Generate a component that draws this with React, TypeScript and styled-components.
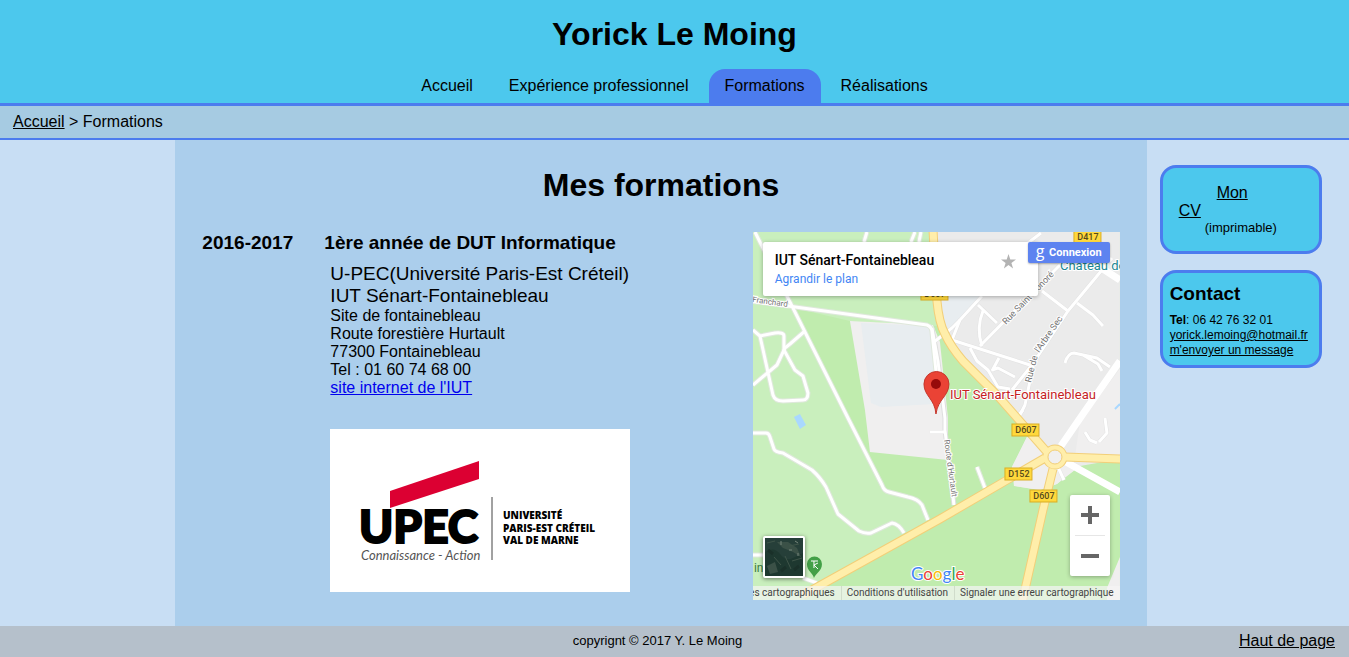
import React from "react";
import styled, { createGlobalStyle } from "styled-components";

const GlobalStyle = createGlobalStyle`
  * { box-sizing: border-box; }
  body {
    margin: 0;
    background: #c8def4;
    color: #000;
    font: 16px/18px "Liberation Sans", Arial, sans-serif;
  }
  h1, h2, h3, p, ul { margin: 0; padding: 0; }
  a { color: #000; }
`;

const royal = "#4c7cee";
const sky = "#4cc8ed";

const Page = styled.div`
  min-height: 100vh;
  display: flex;
  flex-direction: column;
`;

const Header = styled.header`
  background: ${sky};
  border-bottom: 3px solid ${royal};
  padding-top: 16px;
  text-align: center;
`;

const Title = styled.h1`
  font-size: 32px;
  line-height: 37px;
`;

const Nav = styled.nav`
  display: flex;
  justify-content: center;
  gap: 4px;
  margin-top: 16px;
`;

const Tab = styled.a<{ $active?: boolean }>`
  padding: 8px 16px;
  border-radius: 16px 16px 0 0;
  text-decoration: none;
  background: ${(p) => (p.$active ? royal : "transparent")};
`;

const Breadcrumb = styled.nav`
  background: #a6cbe2;
  border-bottom: 2px solid ${royal};
  padding: 7px 13px;
`;

const Columns = styled.div`
  flex: 1;
  display: grid;
  grid-template-columns: 13% 72% 15%;
`;

const Main = styled.main`
  grid-column: 2;
  background: #abceec;
  padding: 27px 27px 26px;
`;

const PageTitle = styled.h1`
  font-size: 32px;
  line-height: 37px;
  text-align: center;
`;

const Course = styled.section`
  display: grid;
  grid-template-columns: 122px 1fr 40%;
  margin-top: 28px;
`;

const CourseHeading = styled.h2`
  font-size: 19px;
  line-height: 22px;
`;

const Address = styled.div`
  padding: 9px 0 0 6px;
`;

const School = styled.p`
  font-size: 19px;
  line-height: 22px;
`;

const SiteLink = styled.a`
  color: #0000ee;
`;

const Logo = styled.svg`
  display: block;
  width: 300px;
  height: 163px;
  margin-top: 32px;
  background: #fff;
`;

const Aside = styled.aside`
  display: flex;
  flex-direction: column;
  gap: 16px;
  padding: 25px 27px 0 13px;
`;

const Card = styled.section`
  background: ${sky};
  border: 3px solid ${royal};
  border-radius: 16px;
`;

const CvCard = styled(Card)`
  padding: 16px 16px 15px;
`;

const CvLink = styled.a`
  display: block;
  text-indent: 38px;
`;

const Printable = styled.p`
  font-size: 13px;
  line-height: 16px;
  text-align: center;
`;

const ContactCard = styled(Card)`
  padding: 10px 0 7px 7px;
  font-size: 12px;
  line-height: 15px;
`;

const ContactTitle = styled.h2`
  font-size: 19px;
  line-height: 22px;
  margin-bottom: 8px;
`;

const Footer = styled.footer`
  background: #b5c0cb;
  display: grid;
  grid-template-columns: 1fr auto 1fr;
  align-items: center;
  padding: 6px 14px 7px 0;
`;

const Copyright = styled.p`
  grid-column: 2;
  margin-right: 20px;
  font-size: 13px;
`;

const TopLink = styled.a`
  justify-self: end;
`;

const MapFrame = styled.div`
  position: relative;
  height: 368px;
  overflow: hidden;
  font-family: Roboto, sans-serif;
`;

const MapDrawing = styled.svg`
  display: block;
  width: 100%;
  height: 100%;
`;

const PlaceCard = styled.div`
  position: absolute;
  top: 10px;
  left: 10px;
  width: 275px;
  height: 54px;
  padding: 9px 12px;
  display: flex;
  justify-content: space-between;
  background: #fff;
  border-radius: 2px;
  box-shadow: 0 1px 4px rgba(0, 0, 0, 0.3);
`;

const PlaceName = styled.h3`
  font-size: 14px;
  line-height: 18px;
  font-weight: 500;
`;

const EnlargeLink = styled.a`
  display: block;
  font-size: 12px;
  line-height: 20px;
  color: #4285f4;
  text-decoration: none;
`;

const StarButton = styled.button`
  border: 0;
  padding: 3px 10px 0 0;
  background: none;
  align-self: flex-start;
`;

const SignIn = styled.button`
  position: absolute;
  top: 10px;
  right: 10px;
  width: 82px;
  height: 21px;
  padding: 0 8px;
  display: flex;
  align-items: center;
  justify-content: space-between;
  border: 0;
  border-radius: 2px;
  background: #5d83f0;
  color: #fff;
  font: bold 11px/21px Roboto, sans-serif;
  box-shadow: 0 1px 2px rgba(0, 0, 0, 0.3);
`;

const GoogleMark = styled.span`
  font: 16px/16px "Open Sans", sans-serif;
  padding-bottom: 4px;
`;

const ZoomControl = styled.div`
  position: absolute;
  right: 10px;
  bottom: 24px;
  width: 40px;
  height: 81px;
  padding: 0 5px;
  display: flex;
  flex-direction: column;
  background: #fff;
  border-radius: 2px;
  box-shadow: 0 1px 4px rgba(0, 0, 0, 0.3);
`;

const ZoomButton = styled.button`
  flex: 1;
  border: 0;
  padding: 0;
  background: none;
  display: grid;
  place-items: center;
  & + & { border-top: 1px solid #e6e6e6; }
`;

const Satellite = styled.button`
  position: absolute;
  left: 10px;
  bottom: 22px;
  width: 42px;
  height: 42px;
  padding: 0;
  border: 2px solid #fff;
  border-radius: 2px;
  background: #24403a;
  overflow: hidden;
  box-shadow: 0 1px 4px rgba(0, 0, 0, 0.5);
`;

const MapLegal = styled.div`
  position: absolute;
  right: 0;
  bottom: 0;
  left: 0;
  height: 14px;
  display: flex;
  justify-content: flex-end;
  background: rgba(245, 245, 245, 0.7);
  white-space: nowrap;
`;

const LegalLink = styled.a`
  padding: 0 6px 0 5px;
  font-size: 10px;
  line-height: 14px;
  color: #444;
  text-decoration: none;
  & + & { border-left: 1px solid #d0dccb; }
`;

const greenRoads = [
  "M2 0L95 186L129 253Q131 259 136 260L155 265Q165 267 169 273L175 288",
  "M-3 69L35 74L174 93Q179 95 179 100L183 139",
  "M0 98L7 104L22 101Q31 100 31 104V118L42 138L50 144L55 161Q55 168 50 168L30 169Q22 169 20 163L7 104",
  "M0 153L24 133L32 116L37 112L52 99",
  "M-3 201H13Q16 201 17 205L21 217Q22 220 30 221L59 238Q67 245 73 255L85 282L106 299Q112 302 118 301L139 291Q146 292 151 301",
  "M0 323H10M50 346L64 351",
  "M114 0L111 10M162 0L158 10M168 0L166 10M224 235L232 256",
];

const cityRoads = [
  "M288 1L275 11M307 33L227 114",
  "M359 26L315 79L281 130L272 173L267 183M283 128L259 158",
  "M289 59L315 79M229 64L207 88L199 108L277 133",
  "M181 110L199 96L207 88M225 73L244 91M230 79Q223 96 229 114",
  "M217 116L224 129L235 138L245 155L257 157M246 126L239 139M239 138L245 136L262 145",
  "M324 71L340 83L350 94M312 131Q315 121 321 121L344 126L357 135M330 123L345 132L349 139",
  "M332 200L337 208L344 211M346 210L354 201L352 186M305 235L311 248M270 178L264 185",
  "M177 200H192",
];

const yellowRoads =
  "M180 -3L184 69Q186 91 192 102Q198 115 210 129L244 163L294 220M50 363L187 287L292 226M312 225L370 227M300 237L290 278L269 371";

const roadSigns = [
  { x: 321, y: -1, label: "D417" },
  { x: 168, y: 56, label: "D607" },
  { x: 259, y: 192, label: "D607" },
  { x: 252, y: 236, label: "D152" },
  { x: 277, y: 258, label: "D607" },
];

function MapArt() {
  return (
    <MapDrawing viewBox="0 0 367 368" preserveAspectRatio="xMidYMid slice" aria-hidden="true">
      <rect width="367" height="368" fill="#c9efbd" />
      <path d="M41 76L97 89L184 94L190 94L300 210L367 227V368H50L175 288L167 271L134 260L95 186Z" fill="#c0ecae" />
      <path d="M182 0H367V227L327 234L312 245L304 252L287 258L262 254L259 235L274 205L286 212L210 130Q190 112 182 69Z" fill="#ebebeb" />
      <path d="M274 205L259 235L261 254L287 258L304 252L327 234L302 220ZM367 325L354 356V368H367ZM367 137L327 190L322 225L367 227Z" fill="#f0efef" />
      <path d="M97 89L180 93L187 110L195 186V228L117 220L112 178Z" fill="#f0efef" />
      <path d="M108 91L176 94L179 100L182 172L128 175L118 171Z" fill="#e8edf0" />
      <path d="M185 64L230 64L200 98L190 95Z" fill="#e8edf0" />
      <path d="M41 185L47 182L53 193L47 197Z" fill="#a9d8ff" />
      <path d="M362 177L367 172" stroke="#a9d8ff" strokeWidth="2" />
      <g fill="none" strokeLinejoin="round">
        <g stroke="#dfe8dc" strokeWidth="5">
          {greenRoads.map((d) => <path key={d} d={d} />)}
        </g>
        <g stroke="#e2e2e2" strokeWidth="4">
          {cityRoads.map((d) => <path key={d} d={d} />)}
        </g>
        <path d="M179 96L185 129L192 186V198L201 273" stroke="#dedede" strokeWidth="5" />
        <g stroke="#fff" strokeWidth="3">
          {greenRoads.map((d) => <path key={d} d={d} />)}
          {cityRoads.map((d) => <path key={d} d={d} />)}
          <path d="M179 96L185 129L192 186V198L201 273" />
        </g>
        <path d="M308 214L330 182L367 129M313 230L367 260M344 33L367 48" stroke="#fff" strokeWidth="7" />
        <path d={yellowRoads} stroke="#f2cf79" strokeWidth="9" />
        <circle cx="302" cy="225" r="9" stroke="#f2cf79" strokeWidth="7" />
        <path d={yellowRoads} stroke="#ffeeaa" strokeWidth="7" />
        <circle cx="302" cy="225" r="9" stroke="#ffeeaa" strokeWidth="5" />
        <circle cx="302" cy="225" r="7" fill="#f0efef" stroke="#f2cf79" />
      </g>
      {roadSigns.map((s, i) => (
        <g key={i}>
          <rect x={s.x} y={s.y} width="27" height="12" fill="#ffd83c" stroke="#d9ad25" />
          <text x={s.x + 14} y={s.y + 9} textAnchor="middle" fontSize="9" fontWeight="500" fill="#554a1c">{s.label}</text>
        </g>
      ))}
      <g fill="#747474" stroke="#fff" strokeWidth="2" paintOrder="stroke" fontSize="8">
        <text transform="translate(-1 70) rotate(8)">Franchard</text>
        <text transform="translate(253 93) rotate(-46)" fontSize="9">Rue Saint-Honoré</text>
        <text transform="translate(278 151) rotate(-76)" fontSize="9">Rue de</text>
        <text transform="translate(286 121) rotate(-55)" fontSize="9">l'Arbre Sec</text>
        <text transform="translate(191 208) rotate(82)">Route d'Hurtault</text>
      </g>
      <text x="307" y="38" fontSize="13" fill="#1b8793" stroke="#fff" strokeWidth="2" paintOrder="stroke">Château de</text>
      <text x="1" y="340" fontSize="12" fill="#3a7d3f">in</text>
      <path d="M61 346C60 341 54 339 54 332A7 7 0 0 1 69 332C69 339 63 341 61 346Z" fill="#43a047" />
      <path d="M58 329H65M61 329V336M65 331L61 333L65 337" stroke="#fff" fill="none" />
      <path d="M183 182C182 167 171 164 171 152A12 12 0 0 1 196 152C196 164 185 167 183 182Z" fill="#ea4335" stroke="#c5372c" />
      <circle cx="183" cy="152" r="5" fill="#960a0a" />
      <text x="197" y="167" fontSize="13" fill="#c5221f" stroke="#fff" strokeWidth="2" paintOrder="stroke">IUT Sénart-Fontainebleau</text>
      <text x="158" y="348" fontFamily="Lato, sans-serif" fontSize="17" stroke="#fff" strokeWidth="2" paintOrder="stroke">
        <tspan fill="#4285f4">G</tspan><tspan fill="#ea4335">o</tspan><tspan fill="#fbbc05">o</tspan><tspan fill="#4285f4">g</tspan><tspan fill="#34a853">l</tspan><tspan fill="#ea4335">e</tspan>
      </text>
    </MapDrawing>
  );
}

function CampusMap() {
  return (
    <MapFrame>
      <MapArt />
      <PlaceCard>
        <div>
          <PlaceName>IUT Sénart-Fontainebleau</PlaceName>
          <EnlargeLink href="#plan">Agrandir le plan</EnlargeLink>
        </div>
        <StarButton aria-label="Enregistrer">
          <svg width="15" height="15" viewBox="0 0 15 15">
            <path d="M7.500 0L9.300 5.400H15L10.400 8.900L12.100 14.500L7.500 11.100L2.900 14.500L4.600 8.900L0 5.400H5.700Z" fill="#b3b3b3" />
          </svg>
        </StarButton>
      </PlaceCard>
      <SignIn>
        <GoogleMark aria-hidden="true">g</GoogleMark>
        Connexion
      </SignIn>
      <Satellite aria-label="Vue satellite">
        <svg width="38" height="38" viewBox="0 0 38 38">
          <rect width="38" height="38" fill="#263f39" />
          <path d="M0 14Q9 8 15 16T28 20L38 15V38H0Z" fill="#1e3830" />
          <path d="M12 4H23L32 10L36 19L28 14L18 10ZM2 28L10 24L13 34L5 36Z" fill="#3b5147" />
          <path d="M2 5L10 3M20 18L26 31M27 23L37 20M9 19L16 27M24 8L34 6" stroke="#3f5549" strokeWidth="1" />
          <path d="M16 3V7M24 12H27M33 15V18M30 3L33 5" stroke="#75857a" strokeWidth="1" />
          <path d="M3 12L8 16M16 33L21 29M29 32L34 28" stroke="#1a3029" strokeWidth="3" />
        </svg>
      </Satellite>
      <ZoomControl>
        <ZoomButton aria-label="Zoom avant">
          <svg width="18" height="18"><path d="M0 9H18M9 0V18" stroke="#666" strokeWidth="4" /></svg>
        </ZoomButton>
        <ZoomButton aria-label="Zoom arrière">
          <svg width="18" height="4"><path d="M0 2H18" stroke="#666" strokeWidth="4" /></svg>
        </ZoomButton>
      </ZoomControl>
      <MapLegal>
        <LegalLink href="#donnees">Données cartographiques</LegalLink>
        <LegalLink href="#conditions">Conditions d'utilisation</LegalLink>
        <LegalLink href="#erreur">Signaler une erreur cartographique</LegalLink>
      </MapLegal>
    </MapFrame>
  );
}

function UpecLogo() {
  return (
    <Logo viewBox="0 0 300 163" role="img" aria-label="UPEC">
      <path d="M60 62L149 32V50L60 79Z" fill="#dc0032" />
      <path d="M53 84L60 80V90H53Z" />
      <text x="29" y="114" fontFamily="Lato, sans-serif" fontWeight="900" fontSize="46" stroke="#000" strokeWidth="2">UPEC</text>
      <text x="31" y="131" fontFamily="Lato, sans-serif" fontStyle="italic" fontSize="13" fill="#555">Connaissance - Action</text>
      <path d="M162 68V131" stroke="#444" />
      <g fontFamily="'Open Sans', sans-serif" fontWeight="800" fontSize="10">
        <text x="173" y="90">UNIVERSITÉ</text>
        <text x="173" y="103">PARIS-EST CRÉTEIL</text>
        <text x="173" y="115">VAL DE MARNE</text>
      </g>
    </Logo>
  );
}

export default function App() {
  return (
    <Page id="haut">
      <GlobalStyle />
      <Header>
        <Title>Yorick Le Moing</Title>
        <Nav>
          <Tab href="#accueil">Accueil</Tab>
          <Tab href="#experience">Expérience professionnel</Tab>
          <Tab href="#formations" $active>Formations</Tab>
          <Tab href="#realisations">Réalisations</Tab>
        </Nav>
      </Header>
      <Breadcrumb>
        <a href="#accueil">Accueil</a> &gt; Formations
      </Breadcrumb>
      <Columns>
        <Main>
          <PageTitle>Mes formations</PageTitle>
          <Course>
            <CourseHeading as="h3">2016-2017</CourseHeading>
            <div>
              <CourseHeading>1ère année de DUT Informatique</CourseHeading>
              <Address>
                <School>U-PEC(Université Paris-Est Créteil)</School>
                <School>IUT Sénart-Fontainebleau</School>
                <p>Site de fontainebleau</p>
                <p>Route forestière Hurtault</p>
                <p>77300 Fontainebleau</p>
                <p>Tel : 01 60 74 68 00</p>
                <SiteLink href="#iut">site internet de l'IUT</SiteLink>
                <UpecLogo />
              </Address>
            </div>
            <CampusMap />
          </Course>
        </Main>
        <Aside>
          <CvCard>
            <CvLink href="#cv">Mon</CvLink>
            <a href="#cv">CV</a>
            <Printable>(imprimable)</Printable>
          </CvCard>
          <ContactCard>
            <ContactTitle>Contact</ContactTitle>
            <p><b>Tel</b>: 06 42 76 32 01</p>
            <p><a href="mailto:yorick.lemoing@hotmail.fr">yorick.lemoing@hotmail.fr</a></p>
            <p><a href="#message">m'envoyer un message</a></p>
          </ContactCard>
        </Aside>
      </Columns>
      <Footer>
        <Copyright>copyrignt © 2017 Y. Le Moing</Copyright>
        <TopLink href="#haut">Haut de page</TopLink>
      </Footer>
    </Page>
  );
}
